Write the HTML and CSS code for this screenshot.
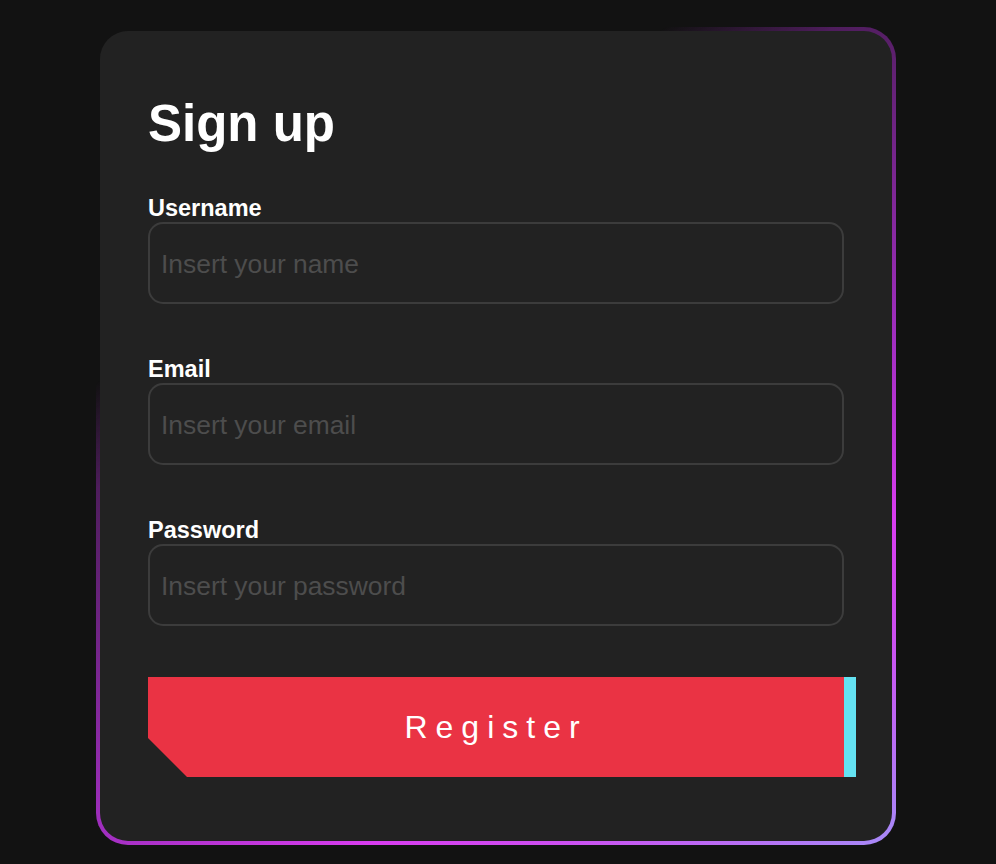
FILE: index.html
```html
<!DOCTYPE html>
<html lang="en">
<head>
<meta charset="utf-8">
<title>Sign up</title>
<link rel="stylesheet" href="styles.css">
</head>
<body>
<main class="page">
  <form class="card">
    <h1 class="title">Sign up</h1>
    <div class="fields">
      <div class="field">
        <label class="label" for="username">Username</label>
        <input class="input" id="username" type="text" placeholder="Insert your name">
      </div>
      <div class="field">
        <label class="label" for="email">Email</label>
        <input class="input" id="email" type="email" placeholder="Insert your email">
      </div>
      <div class="field">
        <label class="label" for="password">Password</label>
        <input class="input" id="password" type="password" placeholder="Insert your password">
      </div>
      <button class="btn" type="button">Register</button>
    </div>
  </form>
</main>
</body>
</html>
```
FILE: styles.css
```css
* { box-sizing: border-box; }

html, body {
  margin: 0;
  background: #121212;
}

body {
  font-family: "Liberation Sans", Arial, Helvetica, sans-serif;
  color: #fff;
}

.page {
  padding: 27px 0 0 96px;
}

.card {
  width: 800px;
  border: 4px solid transparent;
  border-radius: 32px;
  background:
    linear-gradient(#222222, #222222) padding-box,
    linear-gradient(148deg, rgba(80, 30, 95, 0) 27%, #4e1d5c 35%, #a32fc2 62%, #d83cef 75%, #cc4ff0 84%, #a68bf8 100%) border-box;
  padding: 48px 48px 64px;
}

.title {
  margin: 16px 0 41px;
  font-size: 51px;
  line-height: 58px;
  font-weight: 700;
  color: #fff;
}

.fields {
  display: flex;
  flex-direction: column;
  gap: 51px;
}

.field {
  display: flex;
  flex-direction: column;
}

.label {
  font-size: 23.5px;
  line-height: 28px;
  font-weight: 700;
  color: #fff;
}

.input {
  width: 100%;
  height: 82px;
  margin: 0;
  padding: 2px 11px 0;
  border: 2px solid #3c3c3c;
  border-radius: 15px;
  background: transparent;
  color: #ddd;
  font-family: "Liberation Sans", Arial, Helvetica, sans-serif;
  font-size: 26.4px;
  outline: none;
}

.input::placeholder {
  color: #4d4d4d;
}

.btn {
  width: calc(100% + 12px);
  height: 100px;
  margin: 0;
  padding: 0;
  border: none;
  border-right: 12px solid #64e2f2;
  background: #ea3344;
  color: #fff;
  font-family: "Liberation Sans", Arial, Helvetica, sans-serif;
  font-size: 32px;
  letter-spacing: 8px;
  clip-path: polygon(0 0, 100% 0, 100% 100%, 39px 100%, 0 61px);
  cursor: pointer;
}
```
